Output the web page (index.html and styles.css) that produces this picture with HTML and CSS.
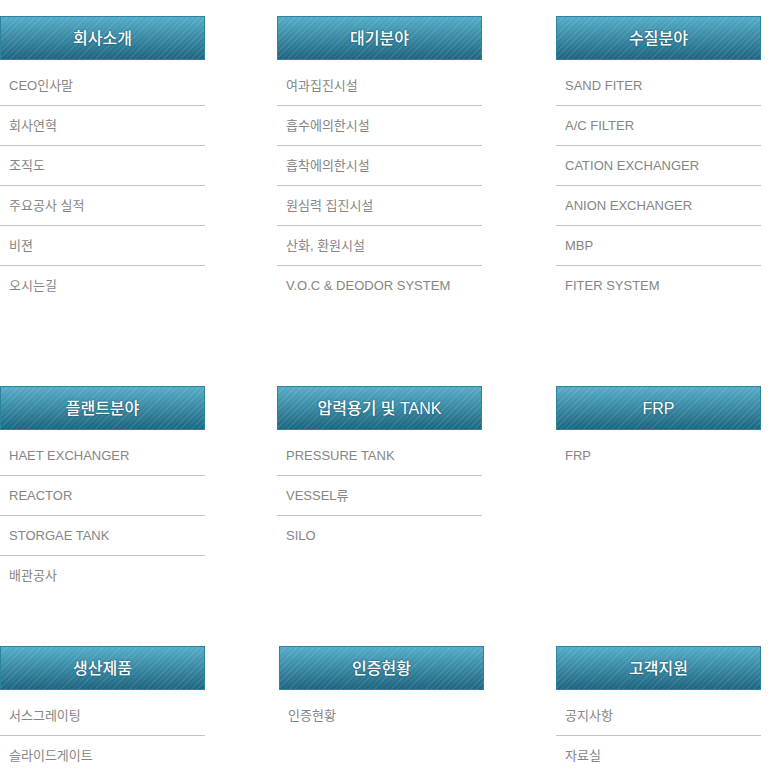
FILE: index.html
```html
<!DOCTYPE html>
<html lang="ko">
<head>
    <meta charset="UTF-8">
    <meta name="viewport" content="width=device-width, initial-scale=1.0">
    <title>사이트맵</title>
    <link rel="stylesheet" href="styles.css">
</head>
<body>

    <section class="sitemap">
        <!-- Row 1 -->
        <div class="menu-row row-tall">
            <div class="menu-group">
                <h2 class="menu-title">회사소개</h2>
                <ul class="menu-list">
                    <li>CEO인사말</li>
                    <li>회사연혁</li>
                    <li>조직도</li>
                    <li>주요공사 실적</li>
                    <li>비젼</li>
                    <li>오시는길</li>
                </ul>
            </div>
            <div class="menu-group">
                <h2 class="menu-title">대기분야</h2>
                <ul class="menu-list">
                    <li>여과집진시설</li>
                    <li>흡수에의한시설</li>
                    <li>흡착에의한시설</li>
                    <li>원심력 집진시설</li>
                    <li>산화, 환원시설</li>
                    <li>V.O.C &amp; DEODOR SYSTEM</li>
                </ul>
            </div>
            <div class="menu-group">
                <h2 class="menu-title">수질분야</h2>
                <ul class="menu-list">
                    <li>SAND FITER</li>
                    <li>A/C FILTER</li>
                    <li>CATION EXCHANGER</li>
                    <li>ANION EXCHANGER</li>
                    <li>MBP</li>
                    <li>FITER SYSTEM</li>
                </ul>
            </div>
        </div>

        <!-- Row 2 -->
        <div class="menu-row row-mid">
            <div class="menu-group">
                <h2 class="menu-title">플랜트분야</h2>
                <ul class="menu-list">
                    <li>HAET EXCHANGER</li>
                    <li>REACTOR</li>
                    <li>STORGAE TANK</li>
                    <li>배관공사</li>
                </ul>
            </div>
            <div class="menu-group">
                <h2 class="menu-title">압력용기 및 TANK</h2>
                <ul class="menu-list">
                    <li>PRESSURE TANK</li>
                    <li>VESSEL류</li>
                    <li>SILO</li>
                </ul>
            </div>
            <div class="menu-group">
                <h2 class="menu-title">FRP</h2>
                <ul class="menu-list">
                    <li>FRP</li>
                </ul>
            </div>
        </div>

        <!-- Row 3 -->
        <div class="menu-row">
            <div class="menu-group">
                <h2 class="menu-title">생산제품</h2>
                <ul class="menu-list">
                    <li>서스그레이팅</li>
                    <li>슬라이드게이트</li>
                </ul>
            </div>
            <div class="menu-group shift">
                <h2 class="menu-title">인증현황</h2>
                <ul class="menu-list">
                    <li>인증현황</li>
                </ul>
            </div>
            <div class="menu-group">
                <h2 class="menu-title">고객지원</h2>
                <ul class="menu-list">
                    <li>공지사항</li>
                    <li>자료실</li>
                </ul>
            </div>
        </div>
    </section>

</body>
</html>
```

FILE: styles.css
```css
/* Global Styles */
body {
    margin: 0;
    padding: 0;
    background-color: #ffffff;
    font-family: "Liberation Sans", "Noto Sans CJK KR", sans-serif;
}

.sitemap {
    padding-top: 16px;
}

.menu-row {
    display: grid;
    grid-template-columns: 277px 279px 205px;
}

.row-tall {
    height: 370px;
}

.row-mid {
    height: 260px;
}

.menu-group {
    width: 205px;
}

.menu-group.shift {
    margin-left: 2px;
}

.menu-title {
    margin: 0;
    height: 42px;
    border: 1px solid #2b83a0;
    background:
        repeating-linear-gradient(135deg, rgba(255, 255, 255, 0.1) 0 1px, rgba(255, 255, 255, 0) 1px 4px),
        linear-gradient(to bottom, #54adc7, #1e6580);
    color: #ffffff;
    font-size: 16px;
    font-weight: 500;
    line-height: 44px;
    text-align: center;
    text-shadow: 0 0 2px rgba(0, 40, 60, 0.7);
}

.menu-list {
    list-style: none;
    margin: 0;
    padding: 6px 0 0;
}

.menu-list li {
    height: 39px;
    line-height: 40px;
    padding-left: 9px;
    border-bottom: 1px solid #c4c4c4;
    color: #858585;
    font-size: 13px;
}

.menu-list li:last-child {
    border-bottom: none;
}
```
